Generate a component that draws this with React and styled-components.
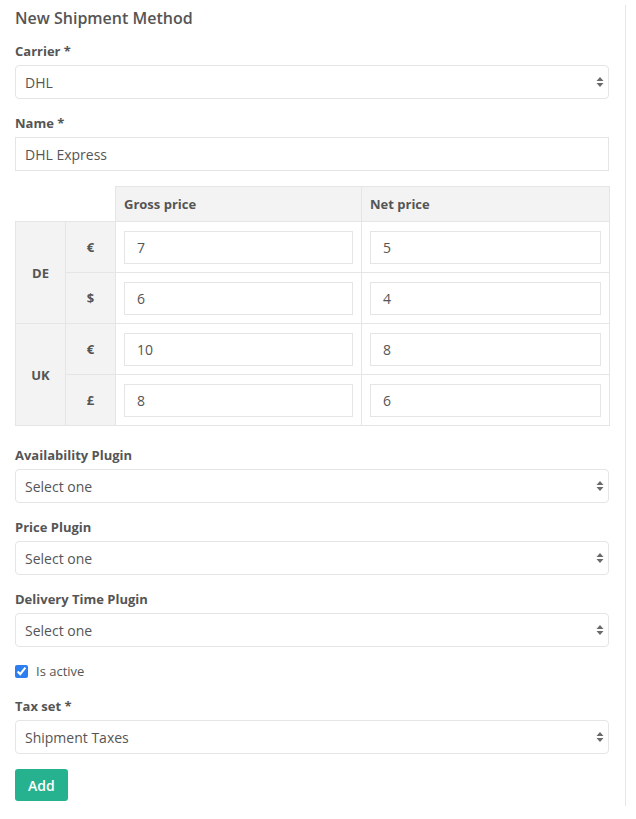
import React from 'react'
import styled, { createGlobalStyle } from 'styled-components'

const GlobalStyle = createGlobalStyle`
    body {
        margin: 0;
        background: #fff;
        font-family: "Open Sans", "Liberation Sans", sans-serif;
        color: #555;
    }
`

const Page = styled.div`
    display: flex;
`

const Panel = styled.div`
    width: 594px;
    margin-top: 5px;
    padding: 0 16px 5px 15px;
    border-right: 1px solid #e6e6e6;
`

const Title = styled.h1`
    margin: 2px 0 13px;
    font-size: 16px;
    line-height: 22px;
    font-weight: 600;
    color: #555;
`

const Group = styled.div`
    margin-bottom: ${p => p.$gap || 15}px;
`

const Label = styled.label`
    display: block;
    margin-bottom: 5px;
    font-size: 13px;
    line-height: 18px;
    font-weight: 700;
    color: #555;
`

const SelectWrap = styled.div`
    position: relative;
`

const Select = styled.select`
    display: block;
    width: 100%;
    height: 34px;
    margin: 0;
    padding: 0 30px 0 9px;
    border: 1px solid #e5e5e5;
    border-radius: 4px;
    background: #fff;
    appearance: none;
    font-family: inherit;
    font-size: 14px;
    color: #555;
    outline: none;
`

const Arrows = styled.svg`
    position: absolute;
    right: 4px;
    top: 11px;
    pointer-events: none;
`

const Input = styled.input`
    display: block;
    box-sizing: border-box;
    width: 100%;
    height: ${p => p.$h || 34}px;
    margin: 0;
    padding: 0 ${p => p.$pad || 9}px;
    border: 1px solid #e5e5e5;
    border-radius: 0;
    font-family: inherit;
    font-size: 14px;
    color: #555;
    outline: none;
`

const Table = styled.table`
    width: 594px;
    border-collapse: collapse;
    table-layout: fixed;
    margin-bottom: 20px;
`

const Head = styled.th`
    height: 34px;
    padding: 0 8px;
    text-align: left;
    font-size: 13px;
    font-weight: 700;
    color: #555;
    background: ${p => (p.$empty ? 'transparent' : '#f3f3f3')};
    border: ${p => (p.$empty ? 'none' : '1px solid #e5e5e5')};
`

const Key = styled.td`
    background: #f3f3f3;
    border: 1px solid #e5e5e5;
    text-align: center;
    font-size: 13px;
    font-weight: 700;
    color: #555;
`

const Cell = styled.td`
    height: 34px;
    padding: 8px;
    border: 1px solid #e5e5e5;
`

const CheckRow = styled.label`
    display: flex;
    align-items: center;
    gap: 8px;
    height: 18px;
    margin-bottom: 17px;
    font-size: 13px;
    color: #555;
`

const Check = styled.input`
    width: 13px;
    height: 13px;
    margin: 0;
    accent-color: #2d7ff0;
`

const Button = styled.button`
    height: 32px;
    padding: 0 13px;
    border: none;
    border-radius: 3px;
    background: #26b18f;
    color: #fff;
    font-family: inherit;
    font-size: 14px;
    font-weight: 600;
    cursor: pointer;
`

const Chooser = ({ value }) => (
    <SelectWrap>
        <Select defaultValue={value}>
            <option>{value}</option>
        </Select>
        <Arrows width="10" height="12" viewBox="0 0 10 12">
            <path d="M1.5 5 L5 1 L8.5 5 Z" fill="#6a6a6a" />
            <path d="M1.5 7 L5 11 L8.5 7 Z" fill="#6a6a6a" />
        </Arrows>
    </SelectWrap>
)

const prices = [
    { country: 'DE', rows: [['€', '7', '5'], ['$', '6', '4']] },
    { country: 'UK', rows: [['€', '10', '8'], ['£', '8', '6']] },
]

const App = () => {
    return (
        <Page>
            <GlobalStyle />
            <Panel>
                <Title>New Shipment Method</Title>
                <Group>
                    <Label>Carrier *</Label>
                    <Chooser value="DHL" />
                </Group>
                <Group>
                    <Label>Name *</Label>
                    <Input defaultValue="DHL Express" />
                </Group>
                <Table>
                    <colgroup>
                        <col style={{ width: 50 }} />
                        <col style={{ width: 50 }} />
                        <col style={{ width: 246 }} />
                        <col style={{ width: 248 }} />
                    </colgroup>
                    <thead>
                        <tr>
                            <Head $empty />
                            <Head $empty />
                            <Head>Gross price</Head>
                            <Head>Net price</Head>
                        </tr>
                    </thead>
                    <tbody>
                        {prices.map(p =>
                            p.rows.map((r, i) => (
                                <tr key={p.country + r[0]}>
                                    {i === 0 && <Key rowSpan={2}>{p.country}</Key>}
                                    <Key>{r[0]}</Key>
                                    <Cell><Input $h={33} $pad={12} defaultValue={r[1]} /></Cell>
                                    <Cell><Input $h={33} $pad={12} defaultValue={r[2]} /></Cell>
                                </tr>
                            ))
                        )}
                    </tbody>
                </Table>
                <Group>
                    <Label>Availability Plugin</Label>
                    <Chooser value="Select one" />
                </Group>
                <Group>
                    <Label>Price Plugin</Label>
                    <Chooser value="Select one" />
                </Group>
                <Group>
                    <Label>Delivery Time Plugin</Label>
                    <Chooser value="Select one" />
                </Group>
                <CheckRow>
                    <Check type="checkbox" defaultChecked />
                    Is active
                </CheckRow>
                <Group>
                    <Label>Tax set *</Label>
                    <Chooser value="Shipment Taxes" />
                </Group>
                <Button>Add</Button>
            </Panel>
        </Page>
    )
}

export default App
